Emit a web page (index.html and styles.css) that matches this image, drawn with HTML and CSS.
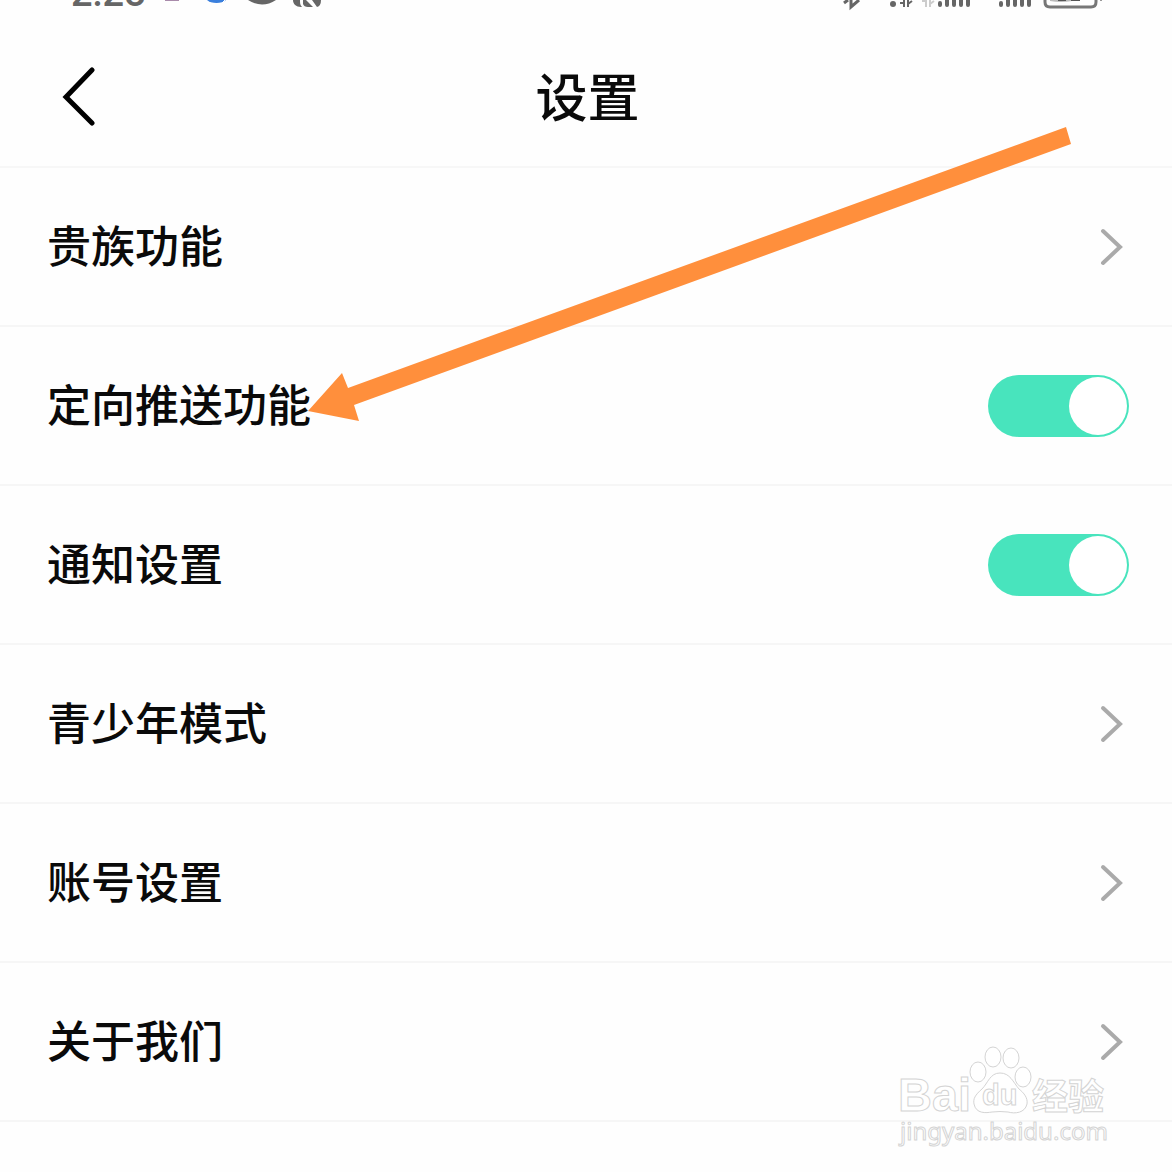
FILE: index.html
```html
<!DOCTYPE html>
<html lang="zh-CN">
<head>
<meta charset="utf-8">
<meta name="viewport" content="width=device-width, initial-scale=1">
<title>设置</title>
<link rel="stylesheet" href="styles.css">
</head>
<body>
<div class="screen">
  <div class="status-bar">
    <div class="status-group">
      <span class="clock">2:28</span>
      <svg class="status-icons" width="164" height="26" viewBox="0 0 164 26" aria-hidden="true">
        <path d="M5 0h14" stroke="#a98bab" stroke-width="2"/>
        <path d="M47 0a11 6 0 0 0 19 0z" fill="#3a7fdd"/>
        <path d="M61 4l4-4" stroke="#fff" stroke-width="1"/>
        <path d="M88 0q14 9 28 0z" fill="#666"/>
        <path d="M133 0c0 4 3 7 8 7h1c-2-2-2-4-2-7zM143 0v4q1 3 5 3h5l-7-7zM152 0l5 7q4-1 4-7z" fill="#666"/>
      </svg>
    </div>
    <svg class="status-icons" width="266" height="26" viewBox="0 0 266 26" aria-hidden="true">
      <path d="M8 3l4-3M15 0v7l8-7" fill="none" stroke="#666" stroke-width="3"/>
      <circle cx="57" cy="4" r="3" fill="#666"/>
      <path d="M64 3h4v4M68 0v7M72 0v7M72 4l4-3" fill="none" stroke="#666" stroke-width="2"/>
      <path d="M86 1h4M90 0v7M94 0v7M94 4l4-3" fill="none" stroke="#ccc" stroke-width="2"/>
      <path d="M104 3v2M111 0v5M118 0v5M125 0v5M132 0v5M165 3v2M172 0v5M179 0v5M186 0v5M193 0v5" stroke="#666" stroke-width="4" stroke-linecap="round"/>
      <path d="M209 0v2q0 5 5 5h41q5 0 5-5V0" fill="none" stroke="#777" stroke-width="3"/>
      <path d="M214 0h22v1q-11 2-22 0z" fill="#bbb"/>
      <path d="M222 0h8M235 0h9" stroke="#555" stroke-width="2"/>
      <path d="M264 0h2" stroke="#999" stroke-width="2"/>
    </svg>
  </div>

  <header class="title-bar">
    <button class="back" type="button" aria-label="返回">
      <svg width="36" height="60" viewBox="0 0 36 60" aria-hidden="true"><path d="M31 4L5 31l26 26" fill="none" stroke="#000" stroke-width="5" stroke-linecap="round"/></svg>
    </button>
    <h1 class="title">设置</h1>
  </header>

  <main class="settings">
    <a class="row" href="#noble"><span class="label">贵族功能</span>
      <svg class="chevron" width="24" height="38" viewBox="0 0 24 38" aria-hidden="true"><path d="M3 3l17 16L3 35"/></svg></a>
    <label class="row" for="push"><span class="label">定向推送功能</span>
      <input class="switch" id="push" type="checkbox" role="switch" checked></label>
    <label class="row" for="notice"><span class="label">通知设置</span>
      <input class="switch" id="notice" type="checkbox" role="switch" checked></label>
    <a class="row" href="#teen"><span class="label">青少年模式</span>
      <svg class="chevron" width="24" height="38" viewBox="0 0 24 38" aria-hidden="true"><path d="M3 3l17 16L3 35"/></svg></a>
    <a class="row" href="#account"><span class="label">账号设置</span>
      <svg class="chevron" width="24" height="38" viewBox="0 0 24 38" aria-hidden="true"><path d="M3 3l17 16L3 35"/></svg></a>
    <a class="row" href="#about"><span class="label">关于我们</span>
      <svg class="chevron" width="24" height="38" viewBox="0 0 24 38" aria-hidden="true"><path d="M3 3l17 16L3 35"/></svg></a>

    <svg class="watermark" width="220" height="112" viewBox="0 0 220 112" role="img" aria-label="Baidu 经验">
      <g class="outline">
        <text class="wm-latin" x="3" y="68">Bai</text>
        <ellipse cx="83" cy="29" rx="8" ry="10"/>
        <ellipse cx="98" cy="14" rx="8" ry="10"/>
        <ellipse cx="116" cy="15" rx="8" ry="10"/>
        <ellipse cx="128" cy="34" rx="8" ry="10"/>
        <path d="M105 30c-10 0-12 10-18 16-7 6-9 10-8 15 2 10 12 9 18 8q8-1 16 0c7 2 17 1 19-8 1-6-3-11-8-15-6-7-9-16-19-16z"/>
        <text class="wm-du" x="87" y="62">du</text>
        <text class="wm-cjk" x="137" y="67">经验</text>
        <text class="wm-url" x="5" y="97">jingyan.baidu.com</text>
      </g>
    </svg>
  </main>

  <svg class="arrow" width="764" height="296" viewBox="0 0 764 296" aria-hidden="true">
    <path d="M0 285l34-38 6 15L758 1l5 17L46 279l5 16z" fill="#ff8f3c"/>
  </svg>
</div>
</body>
</html>
```

FILE: styles.css
```css
* { box-sizing: border-box; }

body {
  margin: 0;
  background: #fefefe;
  color: #0a0a0a;
  font-family: "Noto Sans CJK SC", sans-serif;
}

.screen {
  position: relative;
  min-height: 100vh;
}

.status-bar {
  display: flex;
  justify-content: space-between;
  height: 26px;
  padding: 0 70px 0 71px;
  overflow: hidden;
}

.status-group {
  display: flex;
  gap: 14px;
}

.clock {
  align-self: flex-end;
  padding-bottom: 5px;
  color: #666;
  font: 500 38px/56px Roboto, sans-serif;
}

.status-icons { flex: none; }

.title-bar {
  display: grid;
  grid-template-columns: 1fr auto 1fr;
  align-items: center;
  height: 142px;
  padding: 0 58px 0 61px;
  border-bottom: 2px solid #f7f7f7;
}

.back {
  justify-self: start;
  padding: 0;
  border: 0;
  background: none;
  line-height: 0;
}

.title {
  margin: 0;
  padding-bottom: 3px;
  font-size: 52px;
  font-weight: 500;
  line-height: 76px;
}

.settings { position: relative; }

.row {
  display: flex;
  align-items: center;
  justify-content: space-between;
  height: 159px;
  padding: 0 43px 0 47px;
  border-bottom: 2px solid #f6f6f6;
  color: inherit;
  font-size: 44px;
  font-weight: 500;
  line-height: 64px;
  text-decoration: none;
}

.label { padding-bottom: 6px; }

.chevron {
  margin-right: 5px;
  fill: none;
  stroke: #aaa;
  stroke-width: 4;
  stroke-linecap: round;
}

.switch {
  appearance: none;
  display: flex;
  align-items: center;
  width: 141px;
  height: 62px;
  margin: 0;
  padding: 2px;
  border-radius: 31px;
  background: #ddd;
}

.switch::before {
  content: "";
  width: 58px;
  height: 58px;
  border-radius: 50%;
  background: #fff;
}

.switch:checked {
  justify-content: flex-end;
  background: #48e4bd;
}

.arrow {
  position: absolute;
  top: 126px;
  left: 308px;
  pointer-events: none;
}

.watermark {
  position: absolute;
  right: 57px;
  bottom: -33px;
  pointer-events: none;
}

.outline {
  fill: #fff;
  stroke: #d4d4d4;
  stroke-width: 1;
}

.wm-latin { font: 700 47px "Liberation Sans", sans-serif; }
.wm-du { font: 700 29px "Liberation Sans", sans-serif; }
.wm-cjk { font: 700 36px "Noto Sans CJK SC", sans-serif; }
.wm-url { font: 400 24px "Noto Sans", sans-serif; }
```
